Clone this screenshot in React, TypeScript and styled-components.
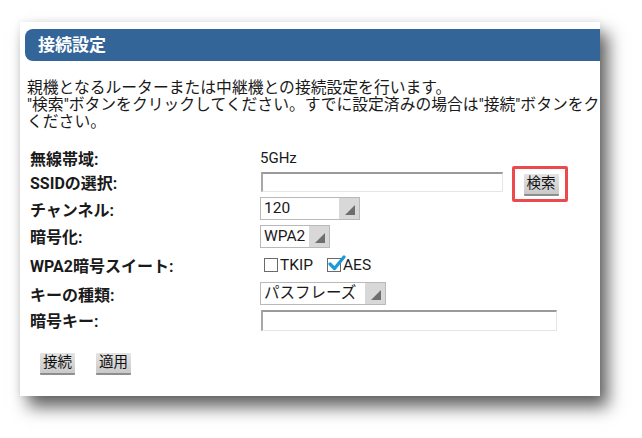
import * as React from "react";
import styled, { createGlobalStyle } from "styled-components";

const GlobalStyle = createGlobalStyle`
  html, body {
    margin: 0;
    padding: 0;
    background: #ffffff;
  }
  body {
    font-family: Roboto, "Noto Sans CJK JP", "Noto Sans", sans-serif;
    color: #1a1a1a;
  }
`;

const Stage = styled.div`
  width: 642px;
  height: 438px;
  padding: 22px 0 0 20px;
  box-sizing: border-box;
  overflow: hidden;
`;

const Card = styled.div`
  width: 580px;
  height: 374px;
  background: #ffffff;
  overflow: hidden;
  display: flex;
  flex-direction: column;
  box-shadow: 8px 11px 16px rgba(0, 0, 0, 0.62), 0 0 7px rgba(0, 0, 0, 0.08);
`;

const Header = styled.div`
  margin: 7px 0 0 5px;
  height: 32px;
  flex-shrink: 0;
  background: #346598;
  border-radius: 8px 0 0 8px;
  color: #ffffff;
  font-size: 17px;
  font-weight: bold;
  line-height: 32px;
  padding-left: 13px;
`;

const Description = styled.p`
  margin: 18px 0 0 7px;
  font-size: 15.8px;
  line-height: 17px;
  white-space: nowrap;
`;

const Form = styled.div`
  margin: 17px 0 0 10px;
  display: flex;
  flex-direction: column;
`;

const Row = styled.div<{ $h: number }>`
  height: ${(p) => p.$h}px;
  display: flex;
  align-items: center;
`;

const Label = styled.div`
  width: 230px;
  flex-shrink: 0;
  font-size: 16px;
  font-weight: bold;
`;

const Value = styled.div`
  display: flex;
  align-items: center;
  font-size: 15px;
`;

const TextInput = styled.div<{ $w: number; $h: number }>`
  width: ${(p) => p.$w}px;
  height: ${(p) => p.$h}px;
  margin-left: 1px;
  box-sizing: border-box;
  background: #ffffff;
  border-top: 2px solid #9a9a9a;
  border-left: 2px solid #a8a8a8;
  border-right: 1px solid #e6e6e6;
  border-bottom: 1px solid #e6e6e6;
`;

const Highlight = styled.div`
  margin: 4px 0 0 9px;
  width: 56px;
  height: 36px;
  box-sizing: border-box;
  border: 3px solid #ec4a4d;
  border-radius: 2px;
  display: flex;
  align-items: center;
  justify-content: center;
  padding-left: 2px;
`;

const GrayButton = styled.div`
  width: 35px;
  height: 20px;
  box-sizing: border-box;
  background: linear-gradient(#e4e4e4, #c9c9c9);
  box-shadow: 0 2px 0 #8e8e8e;
  border-radius: 1px;
  font-size: 14.5px;
  line-height: 20px;
  text-align: center;
  color: #111;
`;

const Select = styled.div<{ $w: number }>`
  width: ${(p) => p.$w}px;
  height: 23px;
  box-sizing: border-box;
  border: 1px solid #b9b9b9;
  background: #ffffff;
  display: flex;
  align-items: stretch;
`;

const SelectText = styled.div`
  flex: 1;
  padding-left: 3px;
  font-size: 15.5px;
  line-height: 21px;
  white-space: nowrap;
`;

const SelectArrow = styled.div`
  width: 20px;
  background: #d8d8d8;
  display: flex;
  align-items: flex-end;
  justify-content: flex-end;
  padding: 0 4px 4px 0;
  box-sizing: border-box;
`;

const CheckGroup = styled.div`
  display: flex;
  align-items: center;
  margin-left: 4px;
`;

const CheckBox = styled.div`
  position: relative;
  width: 14px;
  height: 14px;
  box-sizing: border-box;
  border: 1px solid #6a6a6a;
  background: #fff;
`;

const CheckMark = styled.svg`
  position: absolute;
  left: 0;
  top: -4px;
`;

const CheckText = styled.span<{ $gap: number }>`
  margin: 0 ${(p) => p.$gap}px 0 2px;
  font-size: 15.5px;
`;

const Actions = styled.div`
  margin: 20px 0 0 20px;
  display: flex;
  gap: 21px;
`;

function Arrow() {
  return (
    <svg width="10" height="10" viewBox="0 0 10 10">
      <polygon points="0,10 10,0 10,10" fill="#6e6e6e" />
    </svg>
  );
}

function Dropdown({ width, value }: { width: number; value: string }) {
  return (
    <Select $w={width}>
      <SelectText>{value}</SelectText>
      <SelectArrow>
        <Arrow />
      </SelectArrow>
    </Select>
  );
}

export default function App() {
  return (
    <Stage>
      <GlobalStyle />
      <Card>
        <Header>接続設定</Header>
        <Description>
          親機となるルーターまたは中継機との接続設定を行います。
          <br />
          "検索"ボタンをクリックしてください。すでに設定済みの場合は"接続"ボタンをクリックして
          <br />
          ください。
        </Description>
        <Form>
          <Row $h={22}>
            <Label>無線帯域:</Label>
            <Value>5GHz</Value>
          </Row>
          <Row $h={26}>
            <Label>SSIDの選択:</Label>
            <Value>
              <TextInput $w={242} $h={20} />
              <Highlight>
                <GrayButton>検索</GrayButton>
              </Highlight>
            </Value>
          </Row>
          <Row $h={27}>
            <Label>チャンネル:</Label>
            <Dropdown width={100} value="120" />
          </Row>
          <Row $h={28}>
            <Label>暗号化:</Label>
            <Dropdown width={70} value="WPA2" />
          </Row>
          <Row $h={30}>
            <Label>WPA2暗号スイート:</Label>
            <CheckGroup>
              <CheckBox />
              <CheckText $gap={14}>TKIP</CheckText>
              <CheckBox>
                <CheckMark width="18" height="16" viewBox="0 0 18 16">
                  <path
                    d="M2 9 L6.5 13.5 L16 2"
                    fill="none"
                    stroke="#1c9ad6"
                    strokeWidth="3.2"
                    strokeLinecap="round"
                    strokeLinejoin="round"
                  />
                </CheckMark>
              </CheckBox>
              <CheckText $gap={0}>AES</CheckText>
            </CheckGroup>
          </Row>
          <Row $h={27}>
            <Label>キーの種類:</Label>
            <Dropdown width={126} value="パスフレーズ" />
          </Row>
          <Row $h={26}>
            <Label>暗号キー:</Label>
            <TextInput $w={296} $h={21} />
          </Row>
        </Form>
        <Actions>
          <GrayButton>接続</GrayButton>
          <GrayButton>適用</GrayButton>
        </Actions>
      </Card>
    </Stage>
  );
}
